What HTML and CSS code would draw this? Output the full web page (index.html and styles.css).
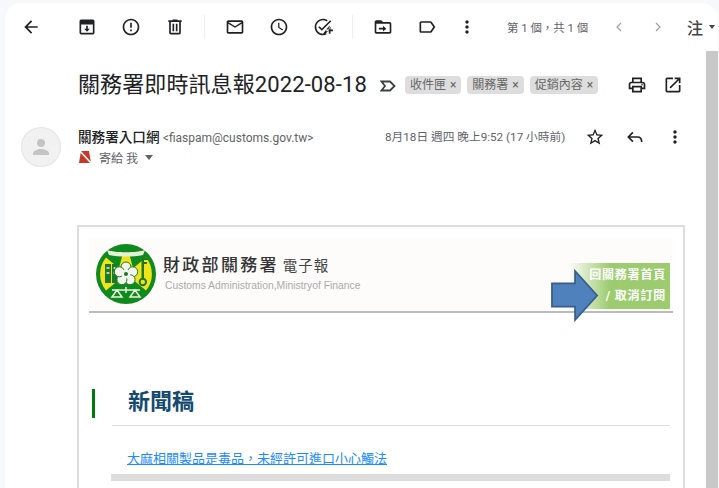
FILE: index.html
```html
<!DOCTYPE html>
<html lang="zh-Hant">
<head>
<meta charset="utf-8">
<title>關務署即時訊息報</title>
<link rel="stylesheet" href="styles.css">
</head>
<body>
<div class="app">
  <div class="card">
    <div class="toolbar">
      <span class="btn back"><svg class="ic" viewBox="0 0 24 24"><path d="M20 11H7.83l5.59-5.59L12 4l-8 8 8 8 1.41-1.41L7.83 13H20v-2z"/></svg></span>
      <span class="btn"><svg class="ic" viewBox="0 0 24 24"><path d="M5 3h14a2 2 0 0 1 2 2v14a2 2 0 0 1-2 2H5a2 2 0 0 1-2-2V5a2 2 0 0 1 2-2zm0 6v10h14V9H5zm6 1.500h2V14h2.500L12 17.800 8.500 14H11v-3.500z"/></svg></span>
      <span class="btn"><svg class="ic" viewBox="0 0 24 24"><path d="M11 15h2v2h-2zm0-8h2v6h-2zm.99-5C6.47 2 2 6.48 2 12s4.47 10 9.99 10C17.52 22 22 17.52 22 12S17.52 2 11.990 2zM12 20c-4.420 0-8-3.580-8-8s3.580-8 8-8 8 3.580 8 8-3.580 8-8 8z"/></svg></span>
      <span class="btn"><svg class="ic" viewBox="0 0 24 24"><path d="M15 4V3H9v1H4v2h1v13c0 1.100.9 2 2 2h10c1.100 0 2-.9 2-2V6h1V4h-5zm2 15H7V6h10v13zM9 8h2v9H9zm4 0h2v9h-2z"/></svg></span>
      <span class="sep"></span>
      <span class="btn"><svg class="ic" viewBox="0 0 24 24"><path d="M20 4H4c-1.100 0-2 .9-2 2v12c0 1.100.9 2 2 2h16c1.100 0 2-.9 2-2V6c0-1.100-.9-2-2-2zm0 14H4V8l8 5 8-5v10zm-8-7L4 6h16l-8 5z"/></svg></span>
      <span class="btn"><svg class="ic" viewBox="0 0 24 24"><path d="M11.990 2C6.470 2 2 6.480 2 12s4.470 10 9.990 10C17.520 22 22 17.520 22 12S17.520 2 11.990 2zM12 20c-4.420 0-8-3.580-8-8s3.580-8 8-8 8 3.580 8 8-3.580 8-8 8zm.5-13H11v6l5.250 3.150.75-1.230-4.500-2.670z"/></svg></span>
      <span class="btn"><svg class="ic" viewBox="0 0 24 24"><path d="M22 5.180L10.590 16.600l-4.240-4.240 1.410-1.410 2.830 2.830 10-10L22 5.180zm-2.210 5.040c.13.57.21 1.170.21 1.780 0 4.420-3.580 8-8 8s-8-3.580-8-8 3.580-8 8-8c1.580 0 3.040.46 4.280 1.250l1.440-1.440C16.100 2.670 14.130 2 12 2 6.480 2 2 6.480 2 12s4.480 10 10 10c1.500 0 2.900-.3 4-.9v-2.300c-1.200.8-2.500 1.200-4 1.200zM19 15h-3v2h3v3h2v-3h3v-2h-3v-3h-2v3z"/></svg></span>
      <span class="sep"></span>
      <span class="btn"><svg class="ic" viewBox="0 0 24 24"><path d="M20 6h-8l-2-2H4c-1.100 0-1.990.9-1.990 2L2 18c0 1.100.9 2 2 2h16c1.100 0 2-.9 2-2V8c0-1.100-.9-2-2-2zm0 12H4V8h16v10zm-8-3H7v-2h5v-2.500l4 3.500-4 3.500V15z"/></svg></span>
      <span class="btn"><svg class="ic" viewBox="0 0 24 24"><path d="M17.630 5.840C17.270 5.330 16.670 5 16 5L5 5.010C3.900 5.010 3 5.900 3 7v10c0 1.100.9 1.990 2 1.990L16 19c.67 0 1.270-.33 1.630-.84L22 12l-4.370-6.160zM16 17H5V7h11l3.550 5L16 17z"/></svg></span>
      <span class="btn narrow"><svg class="ic" viewBox="0 0 24 24"><path d="M12 8c1.100 0 2-.9 2-2s-.9-2-2-2-2 .9-2 2 .9 2 2 2zm0 2c-1.100 0-2 .9-2 2s.9 2 2 2 2-.9 2-2-.9-2-2-2zm0 6c-1.100 0-2 .9-2 2s.9 2 2 2 2-.9 2-2-.9-2-2-2z"/></svg></span>
      <span class="pager">第 1 個，共 1 個</span>
      <span class="chev first"><svg viewBox="0 0 12 12" class="chev-ic"><path d="M8 2L4 6l4 4"/></svg></span>
      <span class="chev"><svg viewBox="0 0 12 12" class="chev-ic"><path d="M4 2l4 4-4 4"/></svg></span>
      <span class="lang">注</span>
      <span class="caret"></span>
    </div>
    <div class="body">
      <div class="main">
        <div class="subject">
          <h1 class="title">關務署即時訊息報2022-08-18</h1>
          <svg class="imp" viewBox="0 0 16 12"><path d="M1.500 1.500h8.500l4.500 4.500-4.500 4.500H1.500L5 6z"/></svg>
          <span class="chip">收件匣<i>×</i></span>
          <span class="chip">關務署<i>×</i></span>
          <span class="chip">促銷內容<i>×</i></span>
          <span class="subject-actions">
            <svg class="ic" viewBox="0 0 24 24"><path d="M19 8h-1V3H6v5H5c-1.660 0-3 1.340-3 3v6h4v4h12v-4h4v-6c0-1.660-1.340-3-3-3zM8 5h8v3H8V5zm8 12v2H8v-4h8v2zm2-2v-2H6v2H4v-4c0-.55.45-1 1-1h14c.55 0 1 .45 1 1v4h-2z"/><circle cx="18" cy="11.500" r="1"/></svg>
            <svg class="ic" viewBox="0 0 24 24"><path d="M19 19H5V5h7V3H5c-1.110 0-2 .9-2 2v14c0 1.100.89 2 2 2h14c1.100 0 2-.9 2-2v-7h-2v7zM14 3v2h3.590l-9.830 9.830 1.410 1.410L19 6.410V10h2V3h-7z"/></svg>
          </span>
        </div>
        <div class="msg-head">
          <span class="avatar"><svg viewBox="0 0 24 24"><circle cx="12" cy="8" r="4"/><path d="M4 20v-1.500C4 15.500 9 14 12 14s8 1.500 8 4.500V20H4z"/></svg></span>
          <div class="who">
            <div class="from"><b>關務署入口網</b> <span class="addr">&lt;fiaspam@customs.gov.tw&gt;</span></div>
            <div class="to">
              <svg class="nomark" viewBox="0 0 14 14"><path d="M3 1h8l2 12H1z"/><path class="slash" d="M1 0l12 13"/></svg>
              <span>寄給 我</span><span class="to-caret"></span>
            </div>
          </div>
          <span class="date">8月18日 週四 晚上9:52 (17 小時前)</span>
          <span class="msg-actions">
            <svg class="ic" viewBox="0 0 24 24"><path d="M22 9.240l-7.190-.62L12 2 9.190 8.630 2 9.240l5.460 4.730L5.820 21 12 17.270 18.180 21l-1.630-7.030L22 9.240zM12 15.400l-3.760 2.270 1-4.280-3.320-2.880 4.380-.38L12 6.100l1.710 4.040 4.380.38-3.320 2.880 1 4.280L12 15.400z"/></svg>
            <svg class="ic line" viewBox="0 0 24 24"><path d="M9.500 6.500L4 12l5.500 5.500M4 12h11c3 0 5 2 5 6"/></svg>
            <svg class="ic" viewBox="0 0 24 24"><path d="M12 8c1.100 0 2-.9 2-2s-.9-2-2-2-2 .9-2 2 .9 2 2 2zm0 2c-1.100 0-2 .9-2 2s.9 2 2 2 2-.9 2-2-.9-2-2-2zm0 6c-1.100 0-2 .9-2 2s.9 2 2 2 2-.9 2-2-.9-2-2-2z"/></svg>
          </span>
        </div>
        <div class="frame">
          <div class="banner">
            <svg class="logo" viewBox="0 0 60 60">
              <circle cx="30" cy="30" r="30" fill="#0f8a1e"/>
              <path d="M30 30L10 13.500A26 26 0 0 0 10 46.500Z" fill="#f2e21a"/>
              <path d="M30 30L50 13.500A26 26 0 0 1 50 46.500Z" fill="#f2e21a"/>
              <path d="M27 9h6l4 15H23z" fill="#f2e21a"/>
              <path d="M11 6c8 3 30 3 38 0l-2 5c-10 2-24 2-34 0z" fill="#e8efd8"/>
              <rect x="9" y="20" width="6" height="19" fill="#1a7a2a"/>
              <rect x="16" y="20" width="5" height="19" fill="#1a7a2a"/>
              <path d="M10.500 24h3M10.500 29h3M17.500 24h2M17.500 29h2" stroke="#e8efd8" stroke-width="1.500"/>
              <rect x="45.500" y="14" width="2.500" height="21" fill="#1a7a2a"/>
              <path d="M48 15h4M48 19h3" stroke="#1a7a2a" stroke-width="2"/>
              <circle cx="46.800" cy="38" r="3.200" fill="none" stroke="#1a7a2a" stroke-width="2"/>
              <g fill="#f4f4ec" stroke="#1a7a2a" stroke-width="1">
                <circle cx="30" cy="23" r="5"/><circle cx="36.700" cy="27.800" r="5"/><circle cx="34.100" cy="35.700" r="5"/><circle cx="25.900" cy="35.700" r="5"/><circle cx="23.300" cy="27.800" r="5"/>
              </g>
              <circle cx="30" cy="30" r="4.500" fill="#f4f4ec"/>
              <circle cx="30" cy="30" r="2" fill="#1a7a2a"/>
              <path d="M16 46h28M30 43v6M21 46l-5 7h10zM39 46l-5 7h10z" fill="none" stroke="#eef3df" stroke-width="1.500"/>
            </svg>
            <div class="brand">
              <div class="brand-name"><span class="big">財政部關務署</span> <span class="small">電子報</span></div>
              <div class="brand-en">Customs Administration,Ministryof Finance</div>
            </div>
            <div class="links"><span>回關務署首頁</span><span>/ 取消訂閱</span></div>
            <svg class="arrow" viewBox="0 0 52 55"><path d="M1 15h24V2l23 25.500L25 53V39H1z"/></svg>
          </div>
          <div class="news-title">新聞稿</div>
          <div class="news-rule"></div>
          <a class="news-link" href="#">大麻相關製品是毒品，未經許可進口小心觸法</a>
          <div class="news-bar"></div>
        </div>
      </div>
      <div class="scroll"></div>
    </div>
  </div>
</div>
</body>
</html>
```
FILE: styles.css
```css
html, body { margin: 0; padding: 0; height: 100%; overflow: hidden; background: #f6f8fc; }
body { font-family: Roboto, "Noto Sans CJK TC", sans-serif; color: #202124; }
.app { height: 488px; padding: 3px 1px 0 5px; box-sizing: border-box; }
.card { height: 485px; background: #fff; border-radius: 16px 16px 0 0; display: flex; flex-direction: column; overflow: hidden; }
.ic { width: 20px; height: 20px; fill: #202124; display: block; }
.ic.line { fill: none; stroke: #202124; stroke-width: 2; }
.toolbar { height: 48px; flex: none; display: flex; align-items: center; }
.btn { width: 44px; height: 24px; display: flex; align-items: center; justify-content: center; flex: none; }
.btn.back { margin-right: 12px; margin-left: 4px; }
.btn.narrow { width: 36px; }
.sep { width: 1px; height: 24px; background: #eceff1; margin: 0 8px 0 7px; flex: none; }
.pager { font-size: 11.400px; color: #5f6368; margin-left: 22px; width: 82px; white-space: nowrap; }
.chev { width: 12px; height: 12px; flex: none; margin-left: 27px; }
.chev.first { margin-left: 24px; }
.chev-ic { width: 12px; height: 12px; display: block; fill: none; stroke: #9aa0a6; stroke-width: 1.2; }
.lang { font-size: 16px; font-weight: 500; color: #444; margin-left: 23px; flex: none; }
.caret { width: 0; height: 0; border: 3.500px solid transparent; border-top: 4px solid #444; border-bottom: 0; margin-left: 6px; flex: none; }
.body { flex: 1; display: flex; min-height: 0; }
.main { flex: 1; min-width: 0; }
.scroll { width: 12px; flex: none; background: #c8c8c8; }
.subject { height: 68px; display: flex; align-items: center; padding-left: 73px; box-sizing: border-box; }
.title { margin: 0; font-size: 22px; font-weight: 400; white-space: nowrap; line-height: 28px; letter-spacing: .1px; }
.imp { width: 16px; height: 12px; margin: 2px 9px 0 13px; fill: none; stroke: #3c4043; stroke-width: 1.800; flex: none; }
.chip { background: #ddd; color: #666; font-size: 12px; height: 18px; line-height: 18px; border-radius: 4px; padding: 0 5px; margin-right: 6px; white-space: nowrap; flex: none; }
.chip i { font-style: normal; margin-left: 4px; font-size: 12px; color: #666; }
.subject-actions { display: flex; gap: 16px; margin-left: 23px; }
.msg-head { display: flex; height: 98px; padding-left: 16px; padding-top: 8px; }
.avatar { width: 40px; height: 40px; border-radius: 50%; background: #f1f1f1; box-shadow: inset 0 0 0 1px #e6e6e6; display: flex; align-items: center; justify-content: center; flex: none; }
.avatar svg { width: 24px; height: 24px; fill: #c4c4c4; }
.who { margin-left: 17px; width: 307px; flex: none; padding-top: 1px; }
.from { font-size: 13px; line-height: 18px; white-space: nowrap; height: 19px; }
.from b { font-weight: 500; font-size: 13.600px; }
.addr { font-size: 12px; color: #5f6368; }
.to { display: flex; align-items: center; font-size: 12px; color: #5f6368; height: 20px; }
.nomark { width: 14px; height: 14px; flex: none; margin-right: 7px; }
.nomark path { fill: #c5392c; }
.nomark .slash { fill: none; stroke: #fff; stroke-width: 1.500; }
.to-caret { width: 0; height: 0; border: 4px solid transparent; border-top: 5px solid #5f6368; border-bottom: 0; margin-left: 7px; }
.date { font-size: 11.700px; color: #5f6368; white-space: nowrap; line-height: 18px; width: 200px; flex: none; padding-top: 1px; }
.msg-actions { display: flex; gap: 20px; }
.frame { margin-left: 72px; width: 594px; height: 300px; border: 2px solid #ddd; border-bottom: 0; padding: 11px 0 0 10px; }
.banner { position: relative; width: 584px; height: 73px; border-bottom: 2px solid #bbb; background: #fdfcfb; display: flex; align-items: flex-start; }
.logo { width: 60px; height: 60px; margin: 6px 0 0 7px; flex: none; }
.brand { margin-left: 7px; padding-top: 15px; }
.brand-name { white-space: nowrap; line-height: 24px; color: #333; }
.big { font-size: 17px; letter-spacing: 2.300px; font-weight: 500; }
.small { font-size: 14.500px; letter-spacing: 1px; color: #444; }
.brand-en { font-family: "Liberation Sans", sans-serif; font-size: 10.350px; color: #aaa; margin: 1px 0 0 2px; white-space: nowrap; }
.links { position: absolute; right: 3px; top: 25px; width: 101px; height: 46px; background: linear-gradient(90deg, #fdfcfb 0%, #9dcc70 40%, #9dcc70 100%); color: #fff; font-size: 12px; font-weight: 700; display: flex; flex-direction: column; align-items: flex-end; justify-content: center; padding-right: 4px; box-sizing: border-box; line-height: 21px; letter-spacing: .8px; }
.arrow { position: absolute; left: 462px; top: 31px; width: 50px; height: 53px; fill: #4f81bd; stroke: #385d8a; stroke-width: 1.800; }
.news-title { margin: 76px 0 0 3px; height: 29px; border-left: 3px solid #007a0c; padding-left: 33px; font-size: 22px; font-weight: 600; line-height: 26px; color: #154a70; }
.news-rule { height: 1px; background: #ddd; margin: 7px 0 0 23px; width: 558px; }
.news-link { display: block; margin: 26px 0 0 38px; font-size: 13px; line-height: 14px; color: #1a8cff; text-decoration: underline; }
.news-bar { height: 7px; background: #ddd; width: 559px; margin: 8px 0 0 22px; }
```
